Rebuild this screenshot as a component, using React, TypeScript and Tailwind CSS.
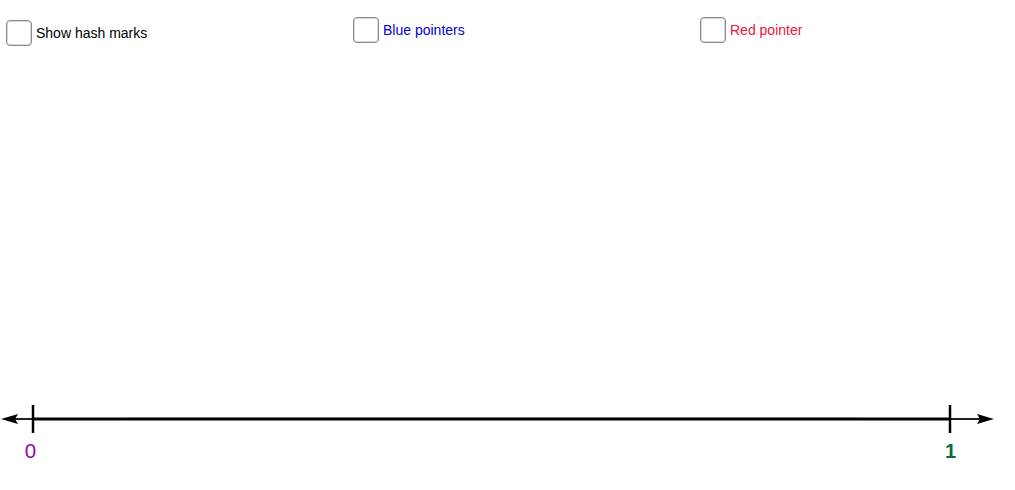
import React from "react";

type ToggleProps = { label: string; color: string; offset?: string };

function Toggle({ label, color, offset = "" }: ToggleProps) {
  return (
    <label className={`flex items-center gap-[4px] ${offset}`}>
      <span className="block w-[26px] h-[26px] rounded-[4px] border border-[#8c8c8c] bg-white shadow-[inset_0_0_0_1px_#d9d9d9]" />
      <span className={`text-[14px] leading-none ${color}`}>{label}</span>
    </label>
  );
}

function NumberLine() {
  return (
    <svg width="1015" height="70" viewBox="0 400 1015 70" className="block">
      {/* arrow shafts beyond the ends */}
      <line x1="14" y1="419" x2="33" y2="419" stroke="#222" strokeWidth="2" />
      <line x1="950" y1="419" x2="981" y2="419" stroke="#222" strokeWidth="2" />
      {/* main segment from 0 to 1 */}
      <line x1="33" y1="419" x2="950" y2="419" stroke="#000" strokeWidth="3" />
      <line x1="125" y1="417.5" x2="860" y2="417.5" stroke="#777" strokeWidth="0.8" />
      {/* arrow heads */}
      <polygon points="1,419 18,414 15,419 18,424" fill="#000" />
      <polygon points="994,419 977,414 980,419 977,424" fill="#000" />
      {/* ticks */}
      <line x1="33" y1="405" x2="33" y2="433" stroke="#000" strokeWidth="2.5" />
      <line x1="950" y1="405" x2="950" y2="433" stroke="#000" strokeWidth="2.5" />
      {/* labels */}
      <text x="30.5" y="458" textAnchor="middle" fontSize="20.5" fill="#9a05a8" fontFamily="'Liberation Sans', Arial, sans-serif">0</text>
      <text x="950.5" y="458" textAnchor="middle" fontSize="20" fontWeight="bold" fill="#0a6b3a" fontFamily="'Liberation Sans', Arial, sans-serif">1</text>
    </svg>
  );
}

export default function App() {
  return (
    <div className="w-[1015px] h-[490px] bg-white overflow-hidden font-['Liberation_Sans',Arial,sans-serif]">
      <div className="grid grid-cols-[347px_347px_1fr] pl-[6px] pt-[17px] items-start">
        <Toggle label="Show hash marks" color="text-black" offset="mt-[3px]" />
        <Toggle label="Blue pointers" color="text-[#0000dd]" />
        <Toggle label="Red pointer" color="text-[#f4113f]" />
      </div>
      <div className="mt-[354px]">
        <NumberLine />
      </div>
    </div>
  );
}
